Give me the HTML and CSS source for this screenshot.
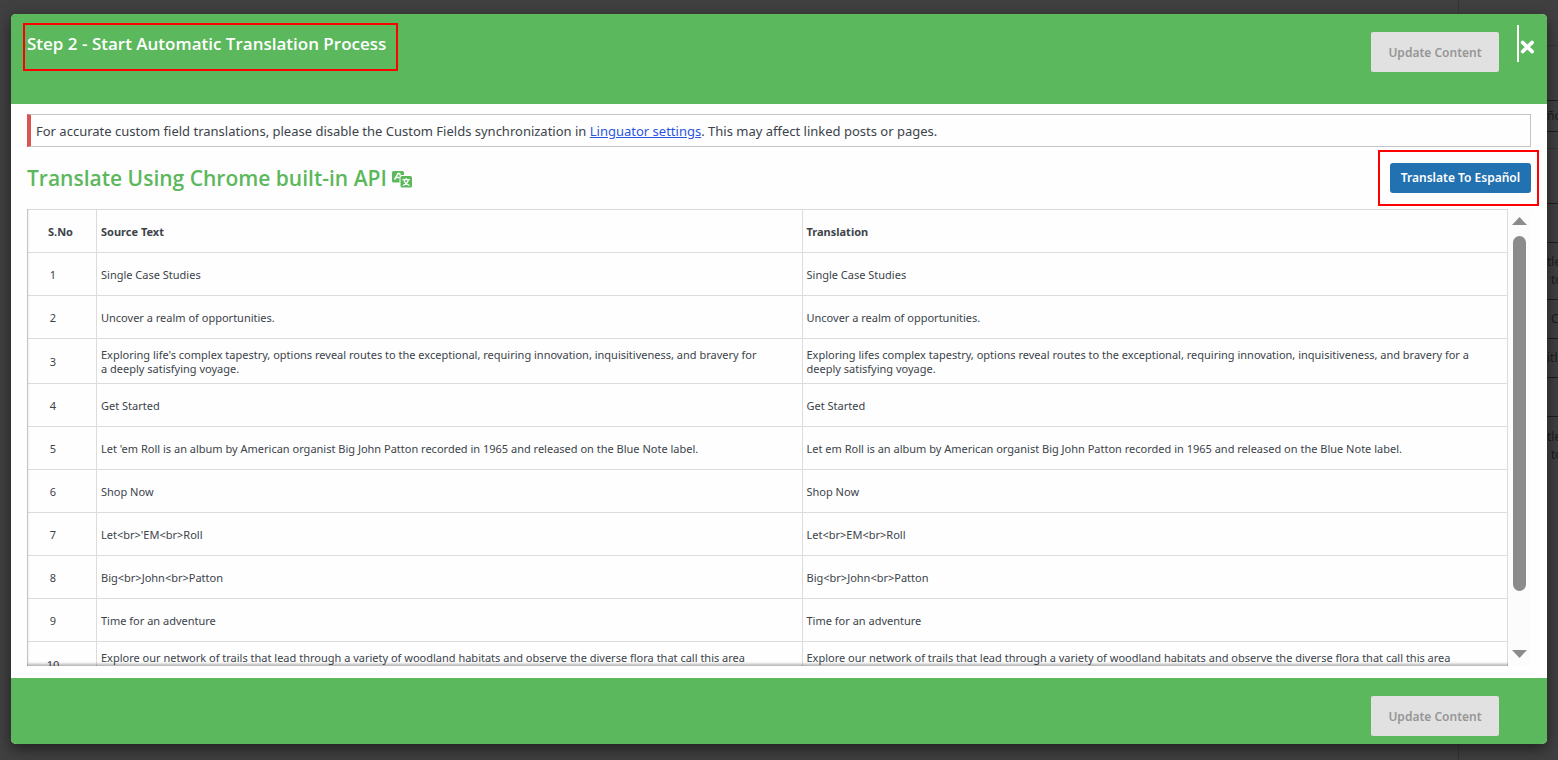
FILE: index.html
```html
<!DOCTYPE html>
<html lang="en">
<head>
<meta charset="utf-8">
<title>Automatic Translation</title>
<link rel="stylesheet" href="styles.css">
</head>
<body>
<div class="backdrop" aria-hidden="true">
  <div class="editor-panel">
    <div class="field gap-top"></div>
    <div class="field gap"></div>
    <div class="field lang"><span>ño</span></div>
    <div class="field slim"></div>
    <div class="field tall"></div>
    <div class="field mid"></div>
    <div class="field double"><span>tle</span><span class="indent">to</span></div>
    <div class="field mid"><span class="indent">C</span></div>
    <div class="field mid"><span>itle</span></div>
    <div class="field mid"></div>
    <div class="field double open"><span>tle</span><span class="indent">to</span></div>
  </div>
</div>

<div class="modal" role="dialog" aria-labelledby="modal-title">
  <header class="modal-header">
    <h2 id="modal-title" class="modal-title">Step 2 - Start Automatic Translation Process</h2>
    <div class="header-actions">
      <button class="update-btn" type="button" disabled>Update Content</button>
      <button class="close-btn" type="button" aria-label="Close">
        <svg width="15" height="14" viewBox="0 0 15 14"><path d="M2.6 2.4l9.6 9.2M12.2 2.4l-9.6 9.2" stroke="#fff" stroke-width="3.6" stroke-linecap="round"/></svg>
      </button>
    </div>
  </header>

  <main class="modal-body">
    <p class="notice">For accurate custom field translations, please disable the Custom Fields synchronization in <a href="#">Linguator settings</a>. This may affect linked posts or pages.</p>

    <div class="api-row">
      <h3 class="api-title">Translate Using Chrome built-in API
        <svg class="api-icon" width="20" height="17" viewBox="0 0 20 17">
          <path d="M1.5 0h9A1.5 1.5 0 0 1 12 1.5V4H9.5A2 2 0 0 0 7.5 6v5.500H1.500A1.500 1.500 0 0 1 0 10V1.500A1.500 1.500 0 0 1 1.500 0z" fill="#5cb85c"/>
          <path d="M2.600 8.600L6 2.500h1.600l.6 2M4.200 6.400h3.300" fill="none" stroke="#fff" stroke-width="1.500"/>
          <rect x="8.500" y="5" width="11.500" height="11.500" rx="1.500" fill="#5cb85c"/>
          <path d="M10.600 8.700h7.200M14.200 7v1.700M16.400 8.900c-.6 2.500-2.600 4.600-5.600 5.600M12 8.900c.6 2.500 2.600 4.600 5.600 5.600" fill="none" stroke="#fff" stroke-width="1.300"/>
        </svg>
      </h3>
      <div class="translate-wrap">
        <button class="translate-btn" type="button">Translate To Español</button>
      </div>
    </div>

    <div class="table-area">
      <div class="table-scroll">
        <table class="strings">
          <thead>
            <tr><th class="num" scope="col">S.No</th><th scope="col">Source Text</th><th scope="col">Translation</th></tr>
          </thead>
          <tbody>
            <tr><td class="num">1</td><td>Single Case Studies</td><td>Single Case Studies</td></tr>
            <tr><td class="num">2</td><td>Uncover a realm of opportunities.</td><td>Uncover a realm of opportunities.</td></tr>
            <tr><td class="num">3</td><td>Exploring life's complex tapestry, options reveal routes to the exceptional, requiring innovation, inquisitiveness, and bravery for<br>a deeply satisfying voyage.</td><td>Exploring lifes complex tapestry, options reveal routes to the exceptional, requiring innovation, inquisitiveness, and bravery for a<br>deeply satisfying voyage.</td></tr>
            <tr><td class="num">4</td><td>Get Started</td><td>Get Started</td></tr>
            <tr><td class="num">5</td><td>Let 'em Roll is an album by American organist Big John Patton recorded in 1965 and released on the Blue Note label.</td><td>Let em Roll is an album by American organist Big John Patton recorded in 1965 and released on the Blue Note label.</td></tr>
            <tr><td class="num">6</td><td>Shop Now</td><td>Shop Now</td></tr>
            <tr><td class="num">7</td><td>Let&lt;br&gt;'EM&lt;br&gt;Roll</td><td>Let&lt;br&gt;EM&lt;br&gt;Roll</td></tr>
            <tr><td class="num">8</td><td>Big&lt;br&gt;John&lt;br&gt;Patton</td><td>Big&lt;br&gt;John&lt;br&gt;Patton</td></tr>
            <tr><td class="num">9</td><td>Time for an adventure</td><td>Time for an adventure</td></tr>
            <tr><td class="num">10</td><td>Explore our network of trails that lead through a variety of woodland habitats and observe the diverse flora that call this area<br>&nbsp;</td><td>Explore our network of trails that lead through a variety of woodland habitats and observe the diverse flora that call this area<br>&nbsp;</td></tr>
          </tbody>
        </table>
      </div>
      <div class="scrollbar" aria-hidden="true">
        <svg width="15" height="8" viewBox="0 0 15 8"><path d="M7.5 0L15 8H0z" fill="#8b8b8b"/></svg>
        <div class="track"><div class="thumb"></div></div>
        <svg width="15" height="8" viewBox="0 0 15 8"><path d="M7.5 8L15 0H0z" fill="#8b8b8b"/></svg>
      </div>
    </div>
  </main>

  <footer class="modal-footer">
    <button class="update-btn" type="button" disabled>Update Content</button>
  </footer>
</div>
</body>
</html>
```
FILE: styles.css
```css
* { box-sizing: border-box; }

body {
  margin: 0;
  height: 100vh;
  padding: 14px 11px 16px;
  overflow: hidden;
  background: #404040;
  color: #3c434a;
  font-family: "Segoe UI", "Noto Sans", "Open Sans", sans-serif;
  font-size: 12px;
}

h2, h3, p { margin: 0; }
button { font-family: inherit; border: 0; }

/* dimmed editor behind the dialog */
.backdrop {
  position: absolute;
  inset: 0;
  display: flex;
  justify-content: flex-end;
  overflow: hidden;
}
.editor-panel {
  width: 100px;
  border-left: 1px solid #353535;
}
.field {
  display: flex;
  flex-direction: column;
  justify-content: center;
  align-items: flex-end;
  border-bottom: 1px solid #1e1e1e;
  color: #1c1c1c;
  line-height: 18px;
}
.field span { width: 11px; white-space: nowrap; }
.field .indent { width: 7px; }
.gap-top { height: 46px; border-color: #363636; }
.gap { height: 55px; }
.lang { height: 31px; }
.slim { height: 17px; border-color: #363636; }
.tall { height: 55px; }
.mid { height: 39px; }
.double { height: 57px; }
.open { border: 0; }

.modal {
  position: relative;
  display: flex;
  flex-direction: column;
  height: 100%;
  border-radius: 5px;
  background: #fefefe;
  box-shadow: 0 5px 15px rgba(0, 0, 0, 0.5);
}
.modal-header {
  display: flex;
  justify-content: space-between;
  align-items: flex-start;
  height: 90px;
  padding: 9px 12px;
  border-radius: 5px 5px 0 0;
  background: #5cb85c;
}
.modal-title,
.api-title {
  font-family: "Segoe UI", "Open Sans", sans-serif;
  font-weight: 600;
}
.modal-title {
  height: 48px;
  padding: 8px 10px 0 2px;
  border: 2px solid #f00;
  color: #fff;
  font-size: 17px;
  line-height: 22px;
}
.header-actions {
  display: flex;
  align-items: flex-start;
  gap: 18px;
}
.update-btn {
  width: 128px;
  height: 40px;
  padding: 0;
  border-radius: 2px;
  background: #e1e1e1;
  color: #969696;
  font-size: 12px;
  font-weight: 600;
}
.header-actions .update-btn { margin-top: 9px; }
.close-btn {
  display: flex;
  align-items: center;
  height: 37px;
  margin-top: 2px;
  padding: 6px 0 0 1px;
  border-left: 2px solid #fff;
  background: none;
}

.modal-body {
  flex: 1;
  min-height: 0;
  display: flex;
  flex-direction: column;
  padding: 10px 16px 12px;
}
.notice {
  padding: 7px 5px 5px;
  border: 1px solid #c3c4c7;
  border-left: 4px solid #d9534f;
  font-size: 13px;
  line-height: 19px;
}
.notice a { color: #2b55e0; }

.api-row {
  display: flex;
  justify-content: space-between;
  align-items: flex-start;
  margin: 3px 0;
}
.api-title {
  padding-top: 14px;
  color: #5cb85c;
  font-size: 21px;
  line-height: 28px;
}
.api-icon { vertical-align: -2px; }
.translate-wrap {
  margin-right: -8px;
  padding: 11px 6px 11px 10px;
  border: 2px solid #f00;
}
.translate-btn {
  display: block;
  width: 141px;
  height: 30px;
  padding: 0 0 2px;
  border-radius: 3px;
  background: #2271b1;
  color: #fff;
  font-size: 12px;
  font-weight: 600;
}

.table-area {
  flex: 1;
  min-height: 0;
  display: flex;
}
.table-scroll {
  position: relative;
  flex: 1;
  overflow: hidden;
}
.table-scroll::after {
  content: "";
  position: absolute;
  inset: 0 -4px 0 0;
  box-shadow: inset 0 -2px 3px rgba(0, 0, 0, 0.3);
  pointer-events: none;
}
.strings {
  width: 100%;
  border-collapse: collapse;
  table-layout: fixed;
}
.strings th,
.strings td {
  height: 43px;
  padding: 9px 4px 7px;
  border: 1px solid #dcdcde;
  font-size: 11px;
  line-height: 14px;
  text-align: left;
  white-space: nowrap;
}
.strings .num { width: 69px; }
.strings th.num { padding-left: 20px; }
.strings td.num { padding: 2px 18px 0 0; text-align: center; }

.scrollbar {
  display: flex;
  flex-direction: column;
  align-items: center;
  width: 23px;
  padding: 8px 0;
  background: #fcfcfc;
}
.track {
  flex: 1;
  width: 13px;
  padding: 11px 0;
}
.thumb {
  height: 88%;
  border-radius: 7px;
  background: #8b8b8b;
}

.modal-footer {
  display: flex;
  justify-content: flex-end;
  padding: 18px 48px 8px;
  border-radius: 0 0 5px 5px;
  background: #5cb85c;
}
```
